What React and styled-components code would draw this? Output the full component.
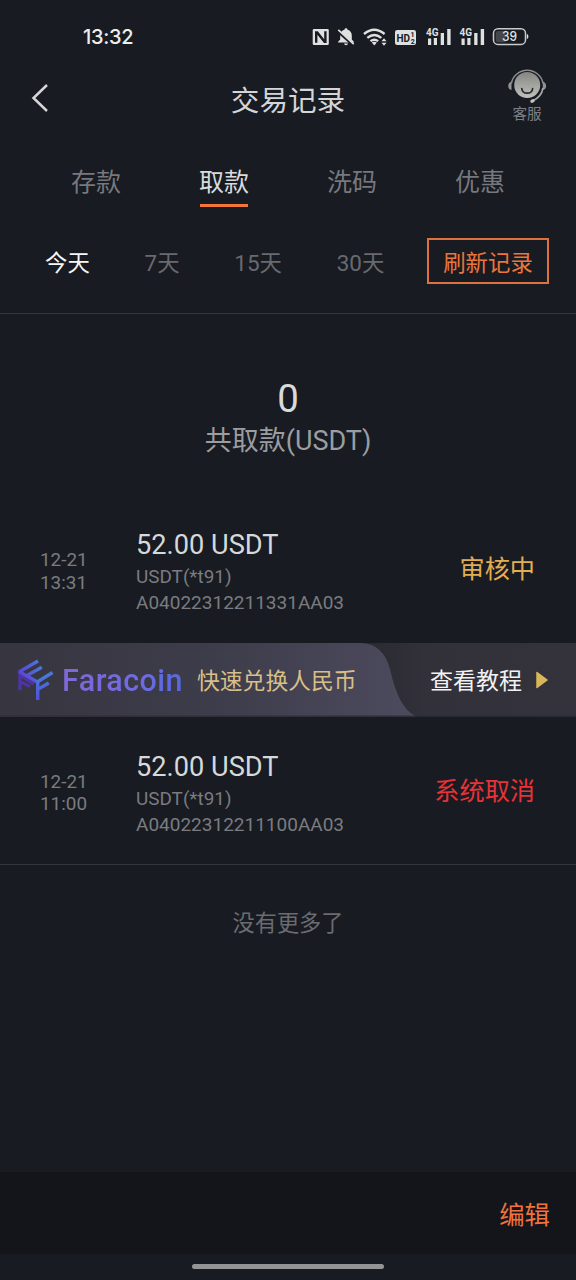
import React from "react";
import styled, { createGlobalStyle } from "styled-components";

const GlobalStyle = createGlobalStyle`
  *, *::before, *::after { box-sizing: border-box; }
  html, body { margin: 0; background: #181b22; }
  body { font-family: Roboto, "Noto Sans CJK SC", sans-serif; color: #d5d7da; }
  button { font: inherit; color: inherit; background: none; border: 0; padding: 0; margin: 0; display: block; white-space: nowrap; }
`;

const Screen = styled.div`
  width: 576px;
  height: 1280px;
  display: flex;
  flex-direction: column;
  background: #181b22;
  overflow: hidden;
`;

const StatusBar = styled.div`
  height: 74px;
  flex: none;
  display: flex;
  align-items: center;
  justify-content: space-between;
  padding: 0 46px 0 83px;
`;

const Clock = styled.div`
  font: 500 20px/24px Inter, sans-serif;
  letter-spacing: -0.3px;
  color: #eceded;
`;

const StatusIcons = styled.svg`
  display: block;
  width: 220px;
  height: 24px;
  margin-bottom: 2px;
`;

const Header = styled.header`
  height: 60px;
  flex: none;
  display: grid;
  grid-template-columns: 98px 1fr 98px;
`;

const Back = styled.button`
  width: 24px;
  height: 32px;
  margin: 8px 0 0 28px !important;
  svg { display: block; }
`;

const Title = styled.h1`
  margin: 0;
  padding-top: 7px;
  text-align: center;
  font-weight: 400;
  font-size: 28.6px;
  line-height: 40px;
  color: #d3d5d7;
`;

const Service = styled.button`
  display: flex;
  flex-direction: column;
  align-items: center;
  margin-top: -8px !important;
  font-size: 14.6px;
  line-height: 21px;
  color: #7e8084;
  svg { display: block; }
`;

const Tabs = styled.nav`
  display: grid;
  grid-template-columns: repeat(4, 128px);
  padding: 29px 32px 0;
  height: 77px;
  flex: none;
  justify-items: center;
`;

const Tab = styled.button`
  height: 44px;
  align-self: start;
  font-size: 25px;
  line-height: 40px;
  border-bottom: 3px solid ${(p) => (p.$active ? "#f37636" : "transparent")};
  color: ${(p) => (p.$active ? "#d9dbdd" : "#76787d")};
  width: 48px;
  display: flex;
  justify-content: center;
`;

const Filters = styled.div`
  height: 103px;
  flex: none;
  display: flex;
  align-items: flex-start;
  padding: 27px 27px 0 45px;
  border-bottom: 1px solid #33363c;
`;

const FilterSet = styled.div`
  flex: 1;
  display: flex;
  gap: 54.8px;
`;

const Filter = styled.button`
  flex: none;
  font-size: 22.4px;
  line-height: 50px;
  height: 46px;
  color: ${(p) => (p.$active ? "#f6f6f6" : "#686a6f")};
`;

const Refresh = styled.button`
  flex: none;
  width: 122px;
  height: 46px;
  border: 2px solid #dd723f;
  font-size: 22.4px;
  line-height: 46px;
  color: #ec763a;
`;

const Summary = styled.section`
  height: 187px;
  flex: none;
  padding-top: 60px;
  text-align: center;
`;

const Total = styled.div`
  font-size: 38.4px;
  line-height: 49px;
  color: #d9dadc;
`;

const TotalLabel = styled.div`
  font-size: 27px;
  line-height: 36px;
  color: #9b9da0;
`;

const Record = styled.article`
  height: ${(p) => (p.$last ? 147 : 142)}px;
  flex: none;
  display: grid;
  align-items: center;
  grid-template-columns: 96px 1fr auto;
  padding: ${(p) => (p.$last ? "4px 41px 0 40px" : "0 41px 2px 40px")};
`;

const When = styled.time`
  padding-top: 1px;
  font-size: 18.9px;
  line-height: 22.4px;
  color: #7a7c80;
  span { display: block; }
`;

const Amount = styled.div`
  font-size: 27.2px;
  line-height: 38px;
  color: #d6d8da;
`;

const Meta = styled.div`
  font-size: ${(p) => (p.$code ? "19px" : "18.9px")};
  line-height: 26px;
  color: #7a7c80;
`;

const State = styled.div`
  padding-bottom: 2px;
  font-size: 25.2px;
  line-height: 36px;
  color: ${(p) => p.$color};
`;

const Banner = styled.a`
  height: 74px;
  flex: none;
  display: grid;
  grid-template: 74px / 1fr;
  overflow: hidden;
  > * { grid-area: 1 / 1; }
`;

const BannerArt = styled.svg`
  display: block;
  width: 576px;
  height: 74px;
`;

const BannerContent = styled.div`
  display: flex;
  align-items: center;
  padding: 0 28px 0 17px;
  position: relative;
`;

const Brand = styled.span`
  width: 124px;
  margin-left: 8px;
  padding-top: 1px;
  font: 500 30.5px/40px Roboto, sans-serif;
  letter-spacing: 0.45px;
  color: transparent;
  background: linear-gradient(90deg, #8167d5 0%, #706be2 60%, #5368df 100%);
  background-clip: text;
  -webkit-background-clip: text;
`;

const Slogan = styled.span`
  margin-left: 11px;
  padding-top: 3px;
  font-size: 22.8px;
  line-height: 36px;
  color: #d8bf87;
`;

const Guide = styled.span`
  margin-left: auto;
  display: flex;
  align-items: center;
  gap: 14px;
  font-size: 23px;
  line-height: 36px;
  color: #f2f2f4;
  svg { display: block; }
`;

const GuideLabel = styled.span`
  padding-top: 3px;
`;

const End = styled.div`
  height: 308px;
  flex: none;
  border-top: 1px solid #33363c;
  padding-top: 41px;
  text-align: center;
  font-size: 22.2px;
  line-height: 34px;
  color: #6a6c70;
`;

const Footer = styled.footer`
  height: 82px;
  flex: none;
  background: #13151a;
  display: flex;
  align-items: center;
  justify-content: flex-end;
  padding: 3px 26px 0 0;
  font-size: 25.4px;
  line-height: 36px;
  color: #f1723c;
`;

const HomeArea = styled.div`
  flex: 1;
  display: flex;
  justify-content: center;
  padding-top: 10px;
`;

const HomeBar = styled.div`
  width: 192px;
  height: 5px;
  border-radius: 3px;
  background: #929496;
`;

function Signal({ x }) {
  return (
    <g transform={`translate(${x} 0)`}>
      <text x="0" y="12.300" fontSize="10.500" fontWeight="700" fontFamily="Roboto" textLength="12.500" lengthAdjust="spacingAndGlyphs">4G</text>
      <rect x="2" y="14.500" width="3.200" height="6.500" />
      <rect x="7.800" y="14" width="3.200" height="7" />
      <rect x="14.700" y="9" width="3.300" height="12" />
      <rect x="21.200" y="5" width="3.400" height="16" />
    </g>
  );
}

function StatusGlyphs() {
  return (
    <StatusIcons viewBox="310 24 220 24" fill="#dfe0e0">
      <path fillRule="evenodd" d="M314 29h13.500q1.300 0 1.300 1.300v13.400q0 1.300-1.300 1.300H314q-1.300 0-1.300-1.300V30.300q0-1.300 1.300-1.300zM315 31.200v11.600h2.400v-8.100l6.600 8.400h2.600V31.200h-2.400v8l-6.400-8z" />
      <path d="M346 28.200c1 0 1.500.6 1.600 1.500 2.900.8 4.200 3 4.200 5.800v3.900l2.100 2.300v.9h-15.800v-.9l2.100-2.300v-3.900c0-2.800 1.300-5 4.200-5.800.1-.9.600-1.500 1.600-1.500zM344 43.500h4q-.3 1.800-2 1.800t-2-1.800z" />
      <path d="M337.500 31l15.800 14" stroke="#181b22" strokeWidth="3" />
      <path d="M338.300 29.800l15.400 14.400" stroke="#dfe0e0" strokeWidth="1.700" />
      <g fill="none" stroke="#dfe0e0" strokeWidth="2.300">
        <path d="M364 34q10.200-8.600 20.600 0" />
        <path d="M367.300 37.800q7-5.600 14 0" />
        <path d="M370.500 41.200q3.800-2.900 7.600 0" />
      </g>
      <path d="M371.800 42.600q2.500-1.700 5 0l-2.500 2.900z" />
      <path d="M381.500 41.300l2.500-3 2.500 3zM381.500 42.700h5l-2.500 3z" />
      <rect x="395" y="30" width="21" height="15" rx="2.200" />
      <g fill="#181b22" fontFamily="Roboto" fontWeight="700">
        <text x="396.500" y="41.900" fontSize="11.500" textLength="13.500" lengthAdjust="spacingAndGlyphs">HD</text>
        <text x="410.600" y="37" fontSize="7">1</text>
        <text x="410.800" y="43.700" fontSize="7">2</text>
      </g>
      <g transform="translate(0 24)">
        <Signal x={426} />
        <Signal x={459.5} />
      </g>
      <rect x="493.500" y="28.800" width="32" height="15.600" rx="4.500" fill="none" stroke="#c9cacb" strokeWidth="1.500" />
      <path d="M498 31h7.500v11.300H498q-2.300 0-2.300-2.300v-6.700q0-2.300 2.300-2.300z" fill="#45474b" />
      <path d="M526.800 34q1.600.3 1.600 2.500t-1.600 2.500z" />
      <text x="502" y="41.200" fontSize="12.500" fontWeight="500" fontFamily="Inter" textLength="15" lengthAdjust="spacingAndGlyphs">39</text>
    </StatusIcons>
  );
}

function ServiceIcon() {
  return (
    <svg width="40" height="38" viewBox="0 0 40 38">
      <defs>
        <linearGradient id="face" x1="0" y1="0" x2="0" y2="1">
          <stop offset="0" stopColor="#858681" />
          <stop offset="1" stopColor="#c0c1bd" />
        </linearGradient>
      </defs>
      <circle cx="20.200" cy="19" r="13" fill="url(#face)" />
      <path d="M14.800 22.500q.4 4.700 5.400 4.700t5.400-4.700" fill="none" stroke="#25272d" strokeWidth="1.700" strokeLinecap="round" />
      <path d="M4.400 17.500a16 15.700 0 0 1 31.600 0" fill="none" stroke="#8c8d8c" strokeWidth="1.500" />
      <path d="M4.500 15.800Q1.200 16.500 1.200 20t3.300 4zM35.800 15.800q3.300.7 3.300 4.200t-3.300 4z" fill="#929391" />
      <path d="M36 22q-1.500 9-10.500 13" fill="none" stroke="#a9aaa7" strokeWidth="1.600" />
      <ellipse cx="25.500" cy="35" rx="2.300" ry="1.700" transform="rotate(-25 25.500 35)" fill="#c2c3c0" />
    </svg>
  );
}

function FaracoinMark() {
  return (
    <svg width="37" height="42" viewBox="0 0 37 42">
      <defs>
        <linearGradient id="markTop" gradientUnits="userSpaceOnUse" x1="2" y1="16" x2="24" y2="6">
          <stop offset="0" stopColor="#5a43d2" />
          <stop offset="1" stopColor="#4c76d9" />
        </linearGradient>
        <linearGradient id="markFront" gradientUnits="userSpaceOnUse" x1="20" y1="19" x2="22" y2="41">
          <stop offset="0" stopColor="#4778d8" />
          <stop offset="1" stopColor="#514ede" />
        </linearGradient>
      </defs>
      <g fill="none" strokeWidth="3.400">
        <path d="M3 11.500V31.300M3 16L17 25M3 22.500l10 5" stroke="#4e33a5" />
        <path d="M2 13L21 2M10.500 16.200L24.800 8.200M2 12.500L20.500 23" stroke="url(#markTop)" />
        <path d="M20.700 41V22.700L35.500 13.500M20.500 30.500l11.300-6.500" stroke="url(#markFront)" />
      </g>
    </svg>
  );
}

function BannerBackground() {
  return (
    <BannerArt viewBox="0 0 576 74">
      <defs>
        <linearGradient id="panel" x1="0" x2="1">
          <stop offset="0" stopColor="#37353f" />
          <stop offset=".5" stopColor="#3d3c4a" />
          <stop offset="1" stopColor="#4c4a5d" />
        </linearGradient>
        <linearGradient id="shade" x1="0" x2="1">
          <stop offset="0" stopColor="#292931" />
          <stop offset=".3" stopColor="#32313a" />
          <stop offset="1" stopColor="#34323b" />
        </linearGradient>
      </defs>
      <rect width="576" height="74" fill="#292a33" />
      <rect x="360" width="216" height="72.500" fill="url(#shade)" />
      <path d="M0 0H362Q383 1 390 26Q398 64 415 73H0z" fill="url(#panel)" />
      <path d="M0 72.500H415V74H0z" fill="#302f39" />
    </BannerArt>
  );
}

function RecordRow({ date, time, amount, code, state, color, last }) {
  return (
    <Record $last={last}>
      <When><span>{date}</span><span>{time}</span></When>
      <div>
        <Amount>{amount}</Amount>
        <Meta>USDT(*t91)</Meta>
        <Meta $code>{code}</Meta>
      </div>
      <State $color={color}>{state}</State>
    </Record>
  );
}

export default function App() {
  return (
    <>
      <GlobalStyle />
      <Screen>
        <StatusBar>
          <Clock>13:32</Clock>
          <StatusGlyphs />
        </StatusBar>
        <Header>
          <Back aria-label="返回">
            <svg width="24" height="32" viewBox="0 0 24 32" fill="none" stroke="#d5d7d9" strokeWidth="2.500">
              <path d="M19 3L5.500 16L19 29" />
            </svg>
          </Back>
          <Title>交易记录</Title>
          <Service><ServiceIcon />客服</Service>
        </Header>
        <Tabs>
          <Tab>存款</Tab>
          <Tab $active>取款</Tab>
          <Tab>洗码</Tab>
          <Tab>优惠</Tab>
        </Tabs>
        <Filters>
          <FilterSet>
            <Filter $active>今天</Filter>
            <Filter>7天</Filter>
            <Filter>15天</Filter>
            <Filter>30天</Filter>
          </FilterSet>
          <Refresh>刷新记录</Refresh>
        </Filters>
        <Summary>
          <Total>0</Total>
          <TotalLabel>共取款(USDT)</TotalLabel>
        </Summary>
        <RecordRow date="12-21" time="13:31" amount="52.00 USDT" code="A04022312211331AA03" state="审核中" color="#e3ad52" />
        <Banner>
          <BannerBackground />
          <BannerContent>
            <FaracoinMark />
            <Brand>Faracoin</Brand>
            <Slogan>快速兑换人民币</Slogan>
            <Guide>
              <GuideLabel>查看教程</GuideLabel>
              <svg width="12" height="18" viewBox="0 0 12 18">
                <path d="M1 1.500L11 9L1 16.500z" fill="#d8b85a" stroke="#d8b85a" strokeWidth="1.500" strokeLinejoin="round" />
              </svg>
            </Guide>
          </BannerContent>
        </Banner>
        <RecordRow last date="12-21" time="11:00" amount="52.00 USDT" code="A04022312211100AA03" state="系统取消" color="#e73337" />
        <End>没有更多了</End>
        <Footer><button>编辑</button></Footer>
        <HomeArea><HomeBar /></HomeArea>
      </Screen>
    </>
  );
}
